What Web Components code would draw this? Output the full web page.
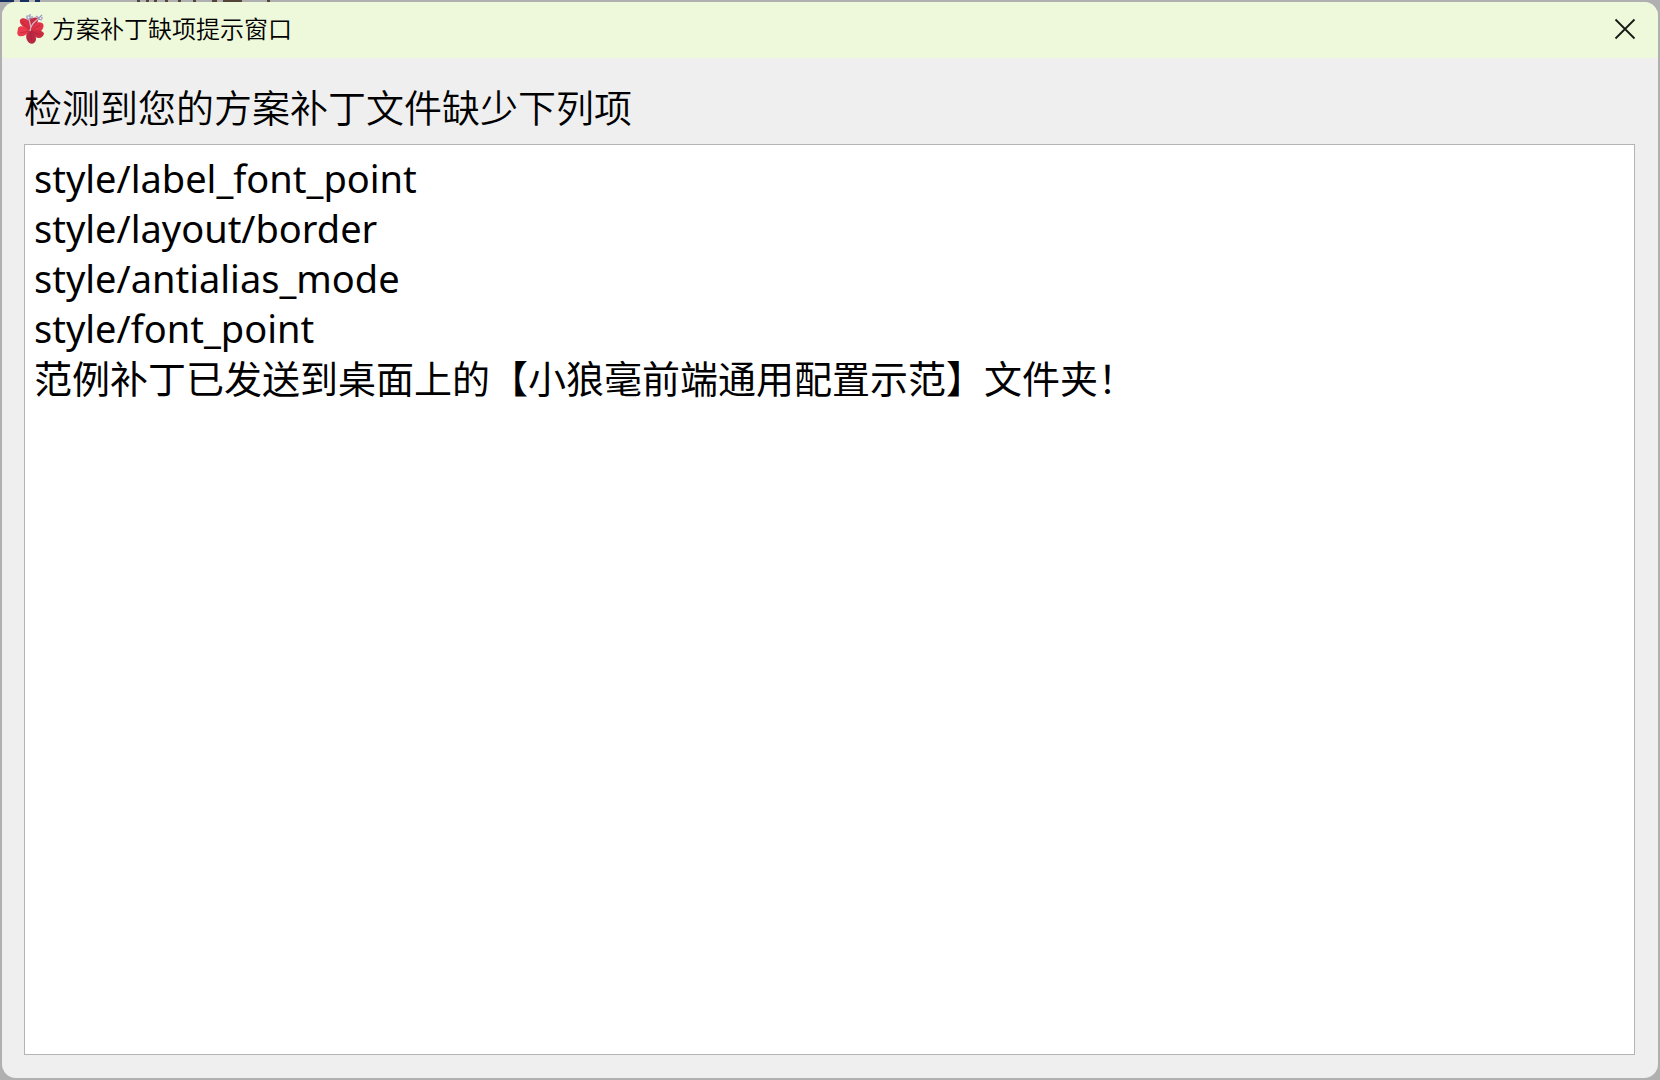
<!DOCTYPE html>
<html lang="zh-CN">
<head>
<meta charset="utf-8">
<title>方案补丁缺项提示窗口</title>
<style>
html, body { height: 100%; margin: 0; }
body { background: #b4b4b4; font-family: "Noto Sans", "Noto Sans CJK SC", sans-serif; color: #000; }
</style>
</head>
<body>
<dialog-window>
  <title-bar slot="title">方案补丁缺项提示窗口</title-bar>
  <missing-items></missing-items>
</dialog-window>

<template id="dialog-window">
<style>
:host { display: flex; height: 100vh; box-sizing: border-box; padding: 2px;
  background:
    linear-gradient(90deg, #163060 0 14px, #b4b4b4 14px 20px, #163060 20px 29px, #b4b4b4 29px 35px, #163060 35px 40px, transparent 40px) 0 0 / 60px 2px no-repeat,
    linear-gradient(90deg, #554438 0 3px, transparent 3px 9px, #554438 9px 12px, transparent 12px 17px, #554438 17px 20px, transparent 20px 28px, #554438 28px 31px, transparent 31px 41px, #554438 41px 44px, transparent 44px 56px, #554438 56px 59px, transparent 59px 75px, #554438 75px 80px, transparent 80px 86px, #554438 86px 105px, transparent 105px 130px, #554438 130px 133px, transparent 133px) 137px 0 / 140px 2px no-repeat,
    #b0b0b0; }
section { flex: 1; min-width: 0; display: flex; flex-direction: column; background: #efefef; border-radius: 14px; overflow: hidden; }
main { flex: 1; display: flex; padding: 23px 23px 23px 22px; }
::slotted(missing-items) { flex: 1; }
</style>
<section role="dialog">
  <slot name="title"></slot>
  <main><slot></slot></main>
</section>
</template>

<template id="title-bar">
<style>
:host { display: flex; align-items: center; height: 56px; box-sizing: border-box; padding: 0 0 2px 14px; gap: 6px; background: #eef8da; }
svg { display: block; flex: none; }
h1 { flex: 1; margin: 0; padding-bottom: 2px; font-family: "Noto Sans CJK SC", sans-serif; font-size: 24px; font-weight: 350; line-height: 32px; }
button { display: grid; place-items: center; width: 66px; height: 54px; padding: 0; border: 0; background: none; }
</style>
<svg width="30" height="32" viewBox="0 0 30 32" aria-hidden="true">
  <path d="M12 18C7 13 3 11 4 7C5 5 8 5 10 6C13 7 15 12 15 17Z" fill="#dc2f43"/>
  <path d="M14 17C11 9 11 6 15 5C20 4 23 4 22 8C21 12 18 15 15 18Z" fill="#c42d42"/>
  <path d="M15 18C18 10 22 8 26 10C29 12 27 16 25 18C22 20 18 19 15 18Z" fill="#e13449"/>
  <path d="M14 18C9 13 4 12 2 15C2 18 0 21 3 23C7 24 11 22 14 18Z" fill="#ec3b4d"/>
  <path d="M14 18C22 16 28 18 28 21C26 26 22 26 18 23Z" fill="#c92b41"/>
  <path d="M14 18C9 21 10 24 11 27C12 30 16 32 18 30C22 27 20 21 14 18Z" fill="#b92843"/>
  <path d="M14 18L6 9M14 18L4 20M14 18L16 28M14 18L25 22M15 18L24 12" fill="none" stroke="#9e2038" stroke-width="1" opacity=".5"/>
  <path d="M14 18C15 12 17 10 22 6M15 15L13 6" fill="none" stroke="#dcaabd" stroke-width="1.3"/>
  <g fill="none" stroke="#9794c4" stroke-width="1.2"><path d="M11 3h3v3h-3zM14 1v2M16 3v3"/><path d="M20 3l3 2l3-3M22 6l4 1M23 4v3M26 4v2"/></g>
</svg>
<h1><slot></slot></h1>
<button type="button" aria-label="关闭">
  <svg width="22" height="22" viewBox="0 0 22 22" aria-hidden="true"><path d="M1.5 1.5L20.5 20.5M20.5 1.5L1.5 20.5" fill="none" stroke="#141a14" stroke-width="1.8"/></svg>
</button>
</template>

<template id="missing-items">
<style>
:host { display: flex; flex-direction: column; gap: 13px; font-size: 38px; line-height: 50px; }
label { display: block; font-family: "Noto Sans CJK SC", sans-serif; font-weight: 350; }
textarea { flex: 1; box-sizing: border-box; width: 100%; margin: 0; padding: 8px 9px; border: 1px solid #b4b4b4; border-radius: 0; outline: 0; resize: none; background: #fff; color: #000; font: inherit; }
</style>
<label for="items">检测到您的方案补丁文件缺少下列项</label>
<textarea id="items" readonly spellcheck="false">style/label_font_point
style/layout/border
style/antialias_mode
style/font_point
范例补丁已发送到桌面上的【小狼毫前端通用配置示范】文件夹！</textarea>
</template>

<script>
for (const name of ["dialog-window", "title-bar", "missing-items"]) {
  customElements.define(name, class extends HTMLElement {
    constructor() {
      super();
      this.attachShadow({ mode: "open" }).append(document.getElementById(name).content.cloneNode(true));
    }
  });
}
</script>
</body>
</html>
